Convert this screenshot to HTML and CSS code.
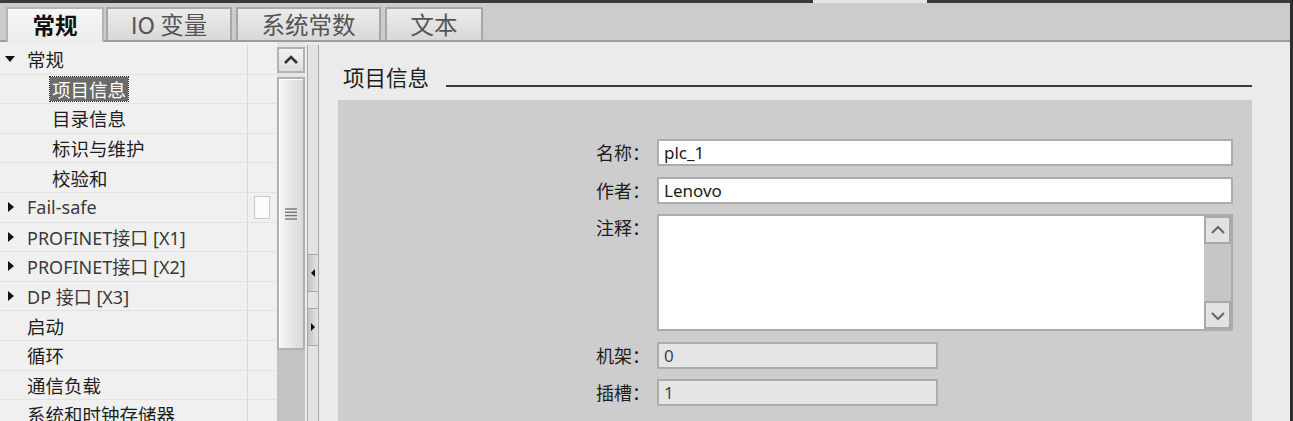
FILE: index.html
```html
<!DOCTYPE html>
<html lang="zh-CN">
<head>
    <meta charset="UTF-8">
    <meta name="viewport" content="width=device-width, initial-scale=1.0">
    <title>属性 - 常规</title>
    <link rel="stylesheet" href="styles.css">
</head>
<body>
<div class="window">
    <div class="top-edge"><span class="top-gap"></span></div>

    <div class="tab-bar">
        <div class="tab tab-general active">常规</div>
        <div class="tab tab-io">IO 变量</div>
        <div class="tab tab-const">系统常数</div>
        <div class="tab tab-text">文本</div>
    </div>

    <div class="main">
        <div class="nav">
            <div class="tree">
                <div class="row"><div class="cell"><span class="arrow-down"></span>常规</div><div class="side"></div></div>
                <div class="row"><div class="cell level2 sel"><span class="selected">项目信息</span></div><div class="side"></div></div>
                <div class="row"><div class="cell level2">目录信息</div><div class="side"></div></div>
                <div class="row"><div class="cell level2">标识与维护</div><div class="side"></div></div>
                <div class="row"><div class="cell level2">校验和</div><div class="side"></div></div>
                <div class="row"><div class="cell latin"><span class="arrow-right"></span>Fail-safe</div><div class="side"><span class="box"></span></div></div>
                <div class="row"><div class="cell latin"><span class="arrow-right"></span>PROFINET接口 [X1]</div><div class="side"></div></div>
                <div class="row"><div class="cell latin"><span class="arrow-right"></span>PROFINET接口 [X2]</div><div class="side"></div></div>
                <div class="row"><div class="cell latin"><span class="arrow-right"></span>DP 接口 [X3]</div><div class="side"></div></div>
                <div class="row"><div class="cell level1">启动</div><div class="side"></div></div>
                <div class="row"><div class="cell level1">循环</div><div class="side"></div></div>
                <div class="row"><div class="cell level1">通信负载</div><div class="side"></div></div>
                <div class="row"><div class="cell level1">系统和时钟存储器</div><div class="side"></div></div>
            </div>

            <div class="vscroll">
                <div class="scroll-btn">
                    <svg width="24" height="22" viewBox="0 0 24 22"><polyline points="6,14 12,8 18,14" fill="none" stroke="#333" stroke-width="2.6"/></svg>
                </div>
                <div class="thumb">
                    <svg width="12" height="12" viewBox="0 0 12 12">
                        <line x1="0" y1="1" x2="12" y2="1" stroke="#777" stroke-width="1.4"/>
                        <line x1="0" y1="4.3" x2="12" y2="4.3" stroke="#777" stroke-width="1.4"/>
                        <line x1="0" y1="7.6" x2="12" y2="7.6" stroke="#777" stroke-width="1.4"/>
                        <line x1="0" y1="11" x2="12" y2="11" stroke="#777" stroke-width="1.4"/>
                    </svg>
                </div>
                <div class="track"></div>
            </div>

            <div class="splitter">
                <div class="split-btn split-left"><span class="tri-left"></span></div>
                <div class="split-btn split-right"><span class="tri-right"></span></div>
            </div>
        </div>

        <div class="content">
            <div class="section-title">
                <h2>项目信息</h2>
                <span class="rule"></span>
            </div>
            <div class="panel">
                <div class="form">
                    <label class="label">名称：</label>
                    <div class="field">plc_1</div>

                    <label class="label">作者：</label>
                    <div class="field">Lenovo</div>

                    <label class="label">注释：</label>
                    <div class="memo">
                        <div class="memo-text"></div>
                        <div class="memo-scroll">
                            <div class="memo-btn">
                                <svg width="22" height="22" viewBox="0 0 22 22"><polyline points="5,14 11,8 17,14" fill="none" stroke="#666" stroke-width="2"/></svg>
                            </div>
                            <div class="memo-track"></div>
                            <div class="memo-btn">
                                <svg width="22" height="22" viewBox="0 0 22 22"><polyline points="5,9 11,15 17,9" fill="none" stroke="#666" stroke-width="2"/></svg>
                            </div>
                        </div>
                    </div>

                    <label class="label">机架：</label>
                    <div class="field short disabled">0</div>

                    <label class="label">插槽：</label>
                    <div class="field short disabled">1</div>
                </div>
            </div>
        </div>
    </div>
</div>
</body>
</html>
```

FILE: styles.css
```css
body {
    margin: 0;
    padding: 0;
    background-color: #ebebeb;
    font-family: "Noto Sans", "Noto Sans CJK SC", sans-serif;
    overflow: hidden;
}
.window {
    width: 1290px;
    height: 421px;
    border-right: 3px solid #2e2e2e;
    display: flex;
    flex-direction: column;
    overflow: hidden;
}

/* top edge + tabs */
.top-edge {
    height: 3px;
    background-color: #3a3a3a;
    display: flex;
}
.top-gap {
    margin-left: 813px;
    width: 114px;
    background-color: #e4e4e4;
}
.tab-bar {
    height: 37px;
    background-color: #cccccc;
    border-bottom: 2px solid #9d9d9d;
    display: flex;
    align-items: flex-end;
    padding-left: 6px;
}
.tab {
    height: 31px;
    border: 2px solid #a7a7a7;
    border-bottom: none;
    background: linear-gradient(#ececec, #d8d8d8);
    color: #555;
    font-family: "Noto Sans CJK SC", sans-serif;
    font-size: 23.5px;
    line-height: 31px;
    text-align: center;
    white-space: nowrap;
    box-sizing: content-box;
}
.tab-general { width: 94px; }
.tab-io { width: 122px; margin-left: 2px; }
.tab-const { width: 141px; margin-left: 4px; }
.tab-text { width: 94px; margin-left: 4px; }
.tab.active {
    background: linear-gradient(#f7f7f7, #ececec);
    color: #111;
    font-weight: bold;
    font-size: 22.5px;
    height: 33px;
    margin-bottom: -2px;
    border-color: #b5b5b5;
}

.main {
    flex: 1;
    display: flex;
    min-height: 0;
}

/* left tree */
.nav {
    width: 320px;
    display: flex;
    background-color: #ebebeb;
}
.tree {
    width: 277px;
    background-color: #f0f0f0;
    padding-top: 3px;
    font-family: "Noto Sans CJK SC", sans-serif;
    font-size: 18.5px;
    color: #1e1e1e;
}
.row {
    height: 29.6px;
    display: flex;
    border-bottom: 1px solid #e2e2e2;
    box-sizing: border-box;
}
.cell {
    width: 248px;
    border-right: 1px solid #d8d8d8;
    display: flex;
    align-items: center;
    padding-left: 5px;
    box-sizing: border-box;
    white-space: nowrap;
}
.cell.level1 { padding-left: 27px; }
.cell.level2 { padding-left: 52px; }
.cell.sel { padding-left: 50px; }
.cell.latin {
    font-family: "Noto Sans", "Noto Sans CJK SC", sans-serif;
    font-size: 18px;
    color: #3a3a3a;
}
.side {
    flex: 1;
    display: flex;
    align-items: center;
}
.box {
    width: 14px;
    height: 21px;
    margin-left: 6px;
    background-color: #fbfbfb;
    border: 1px solid #c9c9c9;
}
.arrow-down {
    width: 0;
    height: 0;
    border-left: 5px solid transparent;
    border-right: 5px solid transparent;
    border-top: 6px solid #111;
    margin-right: 12px;
}
.arrow-right {
    width: 0;
    height: 0;
    border-top: 5px solid transparent;
    border-bottom: 5px solid transparent;
    border-left: 6px solid #111;
    margin-left: 3px;
    margin-right: 13px;
}
.selected {
    background-color: #6b6b6b;
    color: #fff;
    padding: 0 2px;
    line-height: 24px;
    outline: 1px dotted #222;
}

/* tree scrollbar */
.vscroll {
    width: 28px;
    padding-top: 5px;
    display: flex;
    flex-direction: column;
    background-color: #e6e6e6;
}
.scroll-btn {
    height: 26px;
    border: 2px solid #b2b2b2;
    background: linear-gradient(#f2f2f2, #dedede);
    box-sizing: border-box;
    display: flex;
    align-items: center;
    justify-content: center;
}
.thumb {
    height: 273px;
    margin-top: 4px;
    border: 2px solid #b0b0b0;
    box-shadow: inset 1px 1px 0 #fff;
    background: linear-gradient(90deg, #f6f6f6, #d9d9d9);
    box-sizing: border-box;
    display: flex;
    align-items: center;
    justify-content: center;
}
.track {
    flex: 1;
    background-color: #c3c3c3;
}

.splitter {
    width: 12px;
    margin: 3px 0 0 2px;
    border-left: 1px solid #a9a9a9;
    border-right: 1px solid #a9a9a9;
    background-color: #e2e2e2;
    box-sizing: border-box;
}
.split-btn {
    height: 36px;
    border-top: 1px solid #a8a8a8;
    border-bottom: 1px solid #a8a8a8;
    background: linear-gradient(90deg, #c4c4c4, #e4e4e4);
    display: flex;
    align-items: center;
    justify-content: center;
}
.split-left { margin-top: 209px; }
.split-right { margin-top: 16px; }
.tri-left {
    border-top: 4px solid transparent;
    border-bottom: 4px solid transparent;
    border-right: 4px solid #111;
}
.tri-right {
    border-top: 4px solid transparent;
    border-bottom: 4px solid transparent;
    border-left: 4px solid #111;
}

/* right content */
.content {
    flex: 1;
    padding: 0 38px 0 18px;
    display: flex;
    flex-direction: column;
    background-color: #ebebeb;
}
.section-title {
    height: 30px;
    margin-top: 20px;
    display: flex;
    align-items: flex-end;
}
.section-title h2 {
    margin: 0 0 0 5px;
    font-family: "Noto Sans CJK SC", sans-serif;
    font-size: 21.5px;
    font-weight: normal;
    line-height: 30px;
    color: #1e1e1e;
}
.rule {
    flex: 1;
    height: 2px;
    background-color: #3a3a3a;
    margin: 0 0 5px 17px;
}
.panel {
    flex: 1;
    margin-top: 8px;
    background-color: #cdcdcd;
    padding: 39px 19px 0 0;
}
.form {
    display: grid;
    grid-template-columns: 1fr 576px;
    column-gap: 8px;
    row-gap: 10.5px;
}
.label {
    font-family: "Noto Sans CJK SC", sans-serif;
    font-size: 18px;
    line-height: 27px;
    color: #1e1e1e;
    text-align: right;
    align-self: start;
    margin-right: -1px;
}
.field {
    height: 27px;
    border: 2px solid #acacac;
    background-color: #fff;
    box-sizing: border-box;
    padding-left: 5px;
    font-family: "Noto Sans", sans-serif;
    font-size: 17px;
    line-height: 23px;
    color: #1a1a1a;
}
.field.short {
    width: 281px;
}
.field.disabled {
    background-color: #e5e5e5;
    color: #444;
}
.memo {
    height: 117px;
    border: 2px solid #acacac;
    background-color: #fff;
    box-sizing: border-box;
    display: flex;
}
.memo-text {
    flex: 1;
}
.memo-scroll {
    width: 27px;
    display: flex;
    flex-direction: column;
    background-color: #c6c6c6;
}
.memo-btn {
    height: 28px;
    border: 2px solid #a9a9a9;
    background-color: #e2e2e2;
    box-sizing: border-box;
    display: flex;
    align-items: center;
    justify-content: center;
}
.memo-track {
    flex: 1;
}
```
